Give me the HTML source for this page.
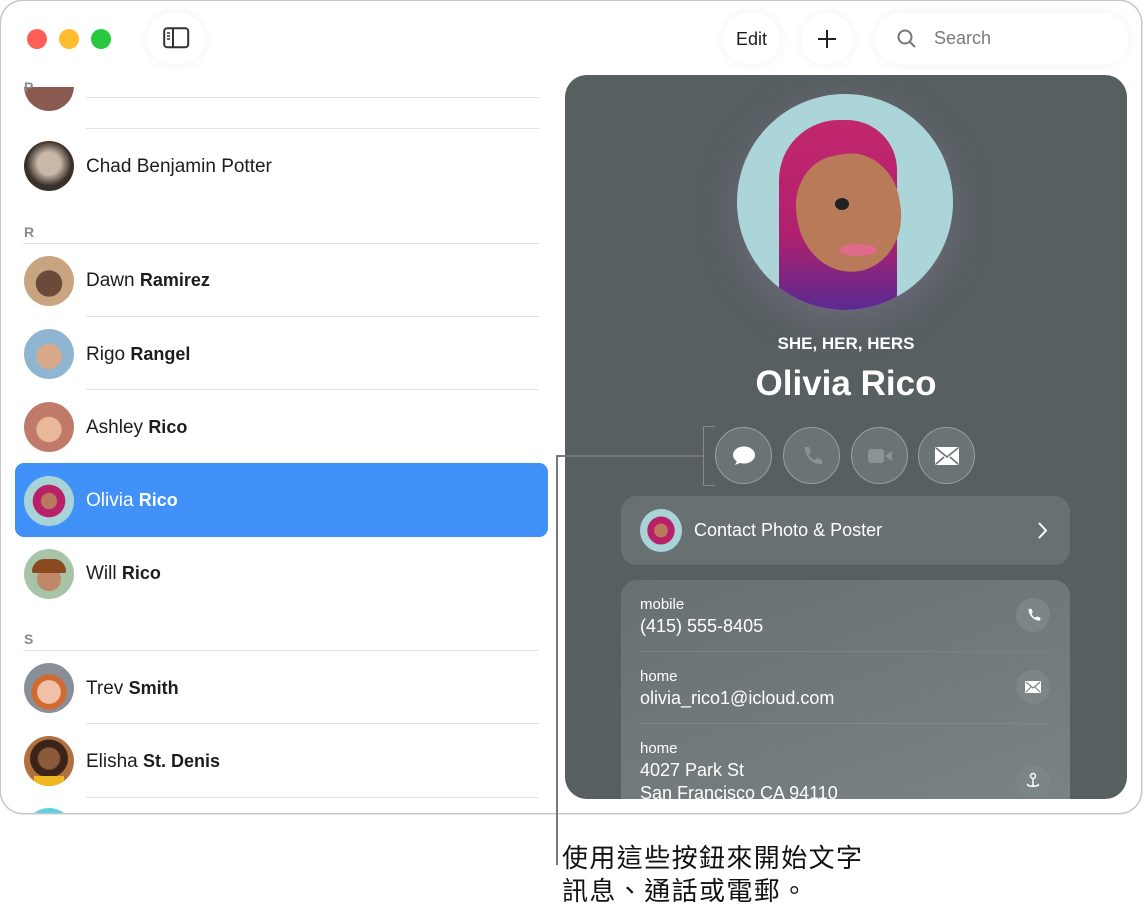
<!DOCTYPE html>
<html><head><meta charset="utf-8"><style>
*{margin:0;padding:0;box-sizing:border-box}
body{width:1146px;height:912px;background:#fff;font-family:"Liberation Sans","Noto Sans CJK TC",sans-serif;position:relative;overflow:hidden;color:#1d1d1f}
.win{position:absolute;left:1px;top:1px;width:1140px;height:812px;box-shadow:0 0 0 1.5px #c8c8c8;border-radius:22px;background:#fff;overflow:hidden}
.abs{position:absolute}
.dot{position:absolute;top:28px;width:20px;height:20px;border-radius:50%}
.btn{position:absolute;background:#fff;border-radius:30px;box-shadow:0 0 12px rgba(0,0,0,.06)}
.hdr{position:absolute;left:23px;font-size:14px;font-weight:bold;color:#8a8a8a}
.sep{position:absolute;height:1px;background:#e2e2e2}
.row{position:absolute;left:85px;font-size:19px}
.row b{font-size:18px}
.av{position:absolute;left:23px;width:50px;height:50px;border-radius:50%;overflow:hidden}
.panel{position:absolute;left:565px;top:75px;width:562px;height:724px;border-radius:22px;background:#575f61;overflow:hidden}
.cb{position:absolute;top:427px;width:57px;height:57px;border-radius:50%;border:1.5px solid #9aa0a2;background:#6b7375}
.card{position:absolute;left:621px;width:449px;border-radius:16px;background:#687072;color:#fff}
.lab{position:absolute;left:19px;font-size:15px}
.val{position:absolute;left:19px;font-size:18px}
.ib{position:absolute;left:395px;width:34px;height:34px;border-radius:50%;background:#7d8587}
.list{position:absolute;left:0;top:2px;width:560px;height:812px}
</style></head><body>
<div class="win">
<div class="dot" style="left:26px;background:#fe5f57"></div>
<div class="dot" style="left:58px;background:#febc2e"></div>
<div class="dot" style="left:90px;background:#28c840"></div>
<div class="btn" style="left:146px;top:12px;width:58px;height:52px"><svg class="abs" style="left:16px;top:14px" width="27" height="22" viewBox="0 0 27 22"><rect x="1.2" y="1.2" width="24" height="19" rx="3" fill="none" stroke="#333" stroke-width="2"/><line x1="10" y1="1.5" x2="10" y2="20" stroke="#333" stroke-width="2"/><path d="M4 6h3M4 9h3M4 12h3" stroke="#333" stroke-width="1.5"/></svg></div>
<div class="btn" style="left:722px;top:12px;width:57px;height:52px;font-size:18px;text-align:center;line-height:52px">Edit</div>
<div class="btn" style="left:800px;top:12px;width:52px;height:52px"><svg class="abs" style="left:16px;top:16px" width="20" height="20"><path d="M10 1v18M1 10h18" stroke="#222" stroke-width="2"/></svg></div>
<div class="btn" style="left:874px;top:12px;width:254px;height:52px"><svg class="abs" style="left:22px;top:16px" width="20" height="20"><circle cx="8" cy="8" r="6.5" fill="none" stroke="#777" stroke-width="2"/><path d="M13 13l5 5" stroke="#777" stroke-width="2"/></svg><span class="abs" style="left:59px;top:15px;font-size:18px;color:#7a7a7a">Search</span></div>

<div class="list">
<div class="av" style="top:58px;background:#8a5a50;clip-path:inset(26px 0 0 0)"></div>
<div class="hdr" style="top:76px">P</div>
<div class="sep" style="left:85px;top:94px;width:453px"></div>
<div class="sep" style="left:85px;top:125px;width:453px"></div>
<div class="av" style="top:138px;background:radial-gradient(circle at 50% 45%,#c9b8a8 0 30%,#3a302a 60%)"></div>
<div class="row" style="top:153px">Chad Benjamin Potter</div>
<div class="hdr" style="top:221px">R</div>
<div class="sep" style="left:22px;top:240px;width:516px"></div>
<div class="av" style="top:253px;background:radial-gradient(circle at 50% 55%,#6b4a3a 0 35%,#c8a480 36%)"></div>
<div class="row" style="top:267px">Dawn <b>Ramirez</b></div>
<div class="sep" style="left:85px;top:313px;width:453px"></div>
<div class="av" style="top:326px;background:radial-gradient(circle at 50% 55%,#d8a888 0 33%,#8fb5d0 35%)"></div>
<div class="row" style="top:341px">Rigo <b>Rangel</b></div>
<div class="sep" style="left:85px;top:386px;width:453px"></div>
<div class="av" style="top:399px;background:radial-gradient(circle at 50% 55%,#e8b898 0 33%,#c07a6a 35%)"></div>
<div class="row" style="top:414px">Ashley <b>Rico</b></div>
<div class="abs" style="left:14px;top:460px;width:533px;height:74px;border-radius:9px;background:#4192f8"></div>
<div class="av" style="top:473px;background:radial-gradient(ellipse at 50% 50%,#b87a5a 0 22%,#b8206a 24% 45%,#a8d4d8 47%)"></div>
<div class="row" style="top:487px;color:#fff">Olivia <b>Rico</b></div>
<div class="av" style="top:546px;background:radial-gradient(circle at 50% 60%,#c08868 0 30%,#a8c4a8 32%)"><div class="abs" style="left:8px;top:10px;width:34px;height:14px;border-radius:14px 14px 2px 2px;background:#8a4a20"></div></div>
<div class="row" style="top:560px">Will <b>Rico</b></div>
<div class="hdr" style="top:628px">S</div>
<div class="sep" style="left:22px;top:647px;width:516px"></div>
<div class="av" style="top:660px;background:radial-gradient(circle at 50% 58%,#f0c0a8 0 30%,#d06a30 32% 45%,#8a8e96 47%)"></div>
<div class="row" style="top:675px">Trev <b>Smith</b></div>
<div class="sep" style="left:85px;top:720px;width:453px"></div>
<div class="av" style="top:733px;background:radial-gradient(circle at 50% 45%,#8a5a3a 0 28%,#3a2418 32% 50%,#b07040 52%)"><div class="abs" style="left:10px;top:40px;width:30px;height:12px;background:#f0b820"></div></div>
<div class="row" style="top:748px">Elisha <b>St. Denis</b></div>
<div class="sep" style="left:85px;top:794px;width:453px"></div>
<div class="av" style="top:805px;background:#60d0e0"></div>
</div>
</div>

<div class="panel">
<div class="abs" style="left:172px;top:19px;width:216px;height:216px;border-radius:50%;background:#acd5da;overflow:hidden;box-shadow:0 10px 40px rgba(180,140,200,.25)">
<div class="abs" style="left:42px;top:26px;width:118px;height:190px;border-radius:60px 50px 10px 10px;background:linear-gradient(#c2276e,#b0206e 60%,#5a2a90)"></div>
<div class="abs" style="left:60px;top:60px;width:104px;height:118px;border-radius:45% 45% 50% 50%;background:#b87a58;transform:rotate(-10deg)"></div>
<div class="abs" style="left:98px;top:104px;width:14px;height:12px;border-radius:50%;background:#222"></div>
<div class="abs" style="left:102px;top:150px;width:38px;height:12px;border-radius:50%;background:#e06a8a"></div>
</div>
<div class="abs" style="left:0;width:562px;top:259px;text-align:center;color:#fff;font-weight:bold;font-size:17px">SHE, HER, HERS</div>
<div class="abs" style="left:0;width:562px;top:289px;text-align:center;color:#fff;font-weight:bold;font-size:35px">Olivia Rico</div>
</div>
<div class="cb" style="left:715px"><svg class="abs" style="left:15px;top:17px" width="26" height="22"><ellipse cx="13" cy="10" rx="11" ry="8.5" fill="#fff"/><path d="M4 20l3-6 4 3z" fill="#fff"/></svg></div>
<div class="cb" style="left:783px"><svg class="abs" style="left:17px;top:17px" width="22" height="22" viewBox="0 0 22 22"><path d="M4 2l4 0 2 5-2 2c1 3 3 5 6 6l2-2 5 2v4c-9 1-18-8-17-17z" fill="#8a9294"/></svg></div>
<div class="cb" style="left:851px"><svg class="abs" style="left:15px;top:19px" width="26" height="18"><rect x="1" y="2" width="16" height="14" rx="3" fill="#8a9294"/><path d="M18 9l7-5v10z" fill="#8a9294"/></svg></div>
<div class="cb" style="left:918px"><svg class="abs" style="left:16px;top:19px" width="24" height="18"><rect x="0" y="0" width="24" height="18" rx="2" fill="#fff"/><path d="M1 1l11 9 11-9M1 17l8-7M23 17l-8-7" stroke="#6b7375" stroke-width="1.6" fill="none"/></svg></div>

<div class="card" style="top:496px;height:69px">
<div class="abs" style="left:19px;top:13px;width:42px;height:43px;border-radius:50%;background:radial-gradient(ellipse at 50% 50%,#b87a5a 0 22%,#b8206a 24% 45%,#a8d4d8 47%)"></div>
<div class="abs" style="left:73px;top:24px;font-size:18px">Contact Photo &amp; Poster</div>
<svg class="abs" style="left:417px;top:26px" width="10" height="17"><path d="M1 1l7 7.5-7 7.5" stroke="#fff" stroke-width="2" fill="none"/></svg>
</div>
<div class="card" style="top:580px;height:219px;border-radius:16px 16px 0 0;background:linear-gradient(160deg,#687072,#7a8284)">
<div class="lab" style="top:16px">mobile</div><div class="val" style="top:36px">(415) 555-8405</div>
<div class="ib" style="top:18px"><svg class="abs" style="left:10px;top:9px" width="15" height="16" viewBox="0 0 22 22"><path d="M4 2l4 0 2 5-2 2c1 3 3 5 6 6l2-2 5 2v4c-9 1-18-8-17-17z" fill="#fff"/></svg></div>
<div class="abs" style="left:19px;top:71px;width:411px;height:1px;background:#7a8284"></div>
<div class="lab" style="top:88px">home</div><div class="val" style="top:108px">olivia_rico1@icloud.com</div>
<div class="ib" style="top:90px"><svg class="abs" style="left:9px;top:11px" width="16" height="12"><rect width="16" height="12" rx="1" fill="#fff"/><path d="M1 1l7 6 7-6M1 11l5-5M15 11l-5-5" stroke="#7d8587" stroke-width="1.2" fill="none"/></svg></div>
<div class="abs" style="left:19px;top:143px;width:411px;height:1px;background:#7f8789"></div>
<div class="lab" style="top:160px">home</div><div class="val" style="top:180px">4027 Park St</div><div class="val" style="top:203px">San Francisco CA 94110</div>
<div class="ib" style="top:185px"><svg class="abs" style="left:9px;top:7px" width="16" height="20"><circle cx="8" cy="4" r="2.5" fill="none" stroke="#fff" stroke-width="1.5"/><path d="M8 6.5v8M3 12c-3 3 13 3 10 0" stroke="#fff" stroke-width="1.5" fill="none"/></svg></div>
</div>
<div class="abs" style="left:565px;top:799px;width:562px;height:13px;background:#fff"></div>

<div class="abs" style="left:556px;top:455px;width:147px;height:1.5px;background:#777"></div>
<div class="abs" style="left:556px;top:455px;width:1.5px;height:410px;background:#777"></div>
<div class="abs" style="left:703px;top:426px;width:12px;height:60px;border:1.5px solid #888;border-right:none"></div>
<div class="abs" style="left:562px;top:842px;font-size:26px;letter-spacing:1.4px;line-height:33px;color:#111">使用這些按鈕來開始文字<br>訊息、通話或電郵。</div>
</body></html>
